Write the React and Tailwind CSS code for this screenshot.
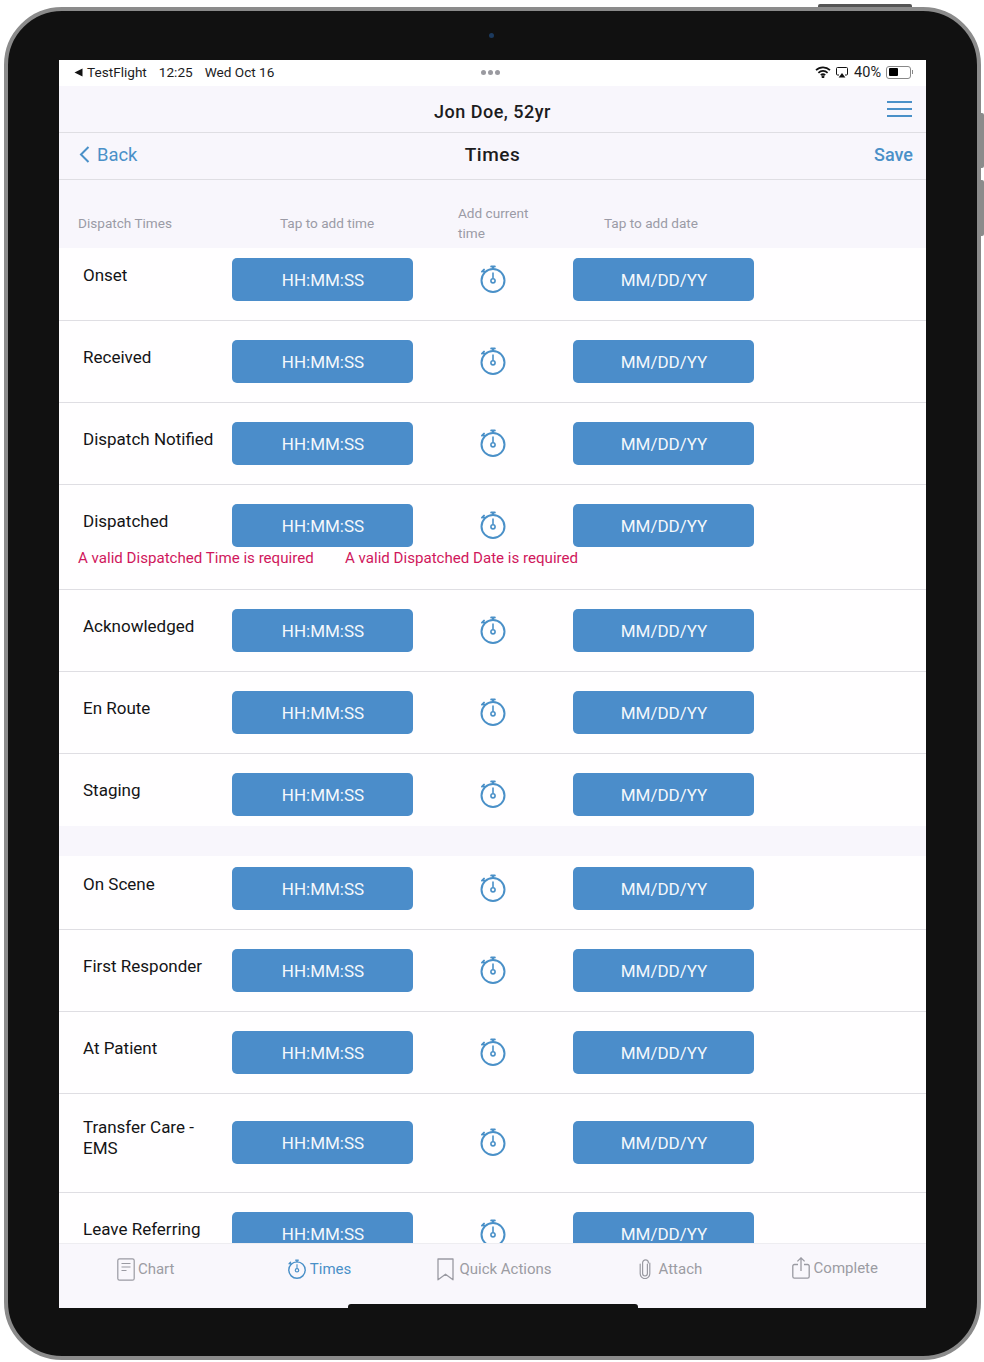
const FONT = "font-['Roboto',sans-serif]";

const GROUP_ONE = [
  { label: "Onset", cls: "pt-[10px] pb-[19px] border-b" },
  { label: "Received", cls: "pt-[19px] pb-[19px] border-b" },
  { label: "Dispatch Notified", cls: "pt-[19px] pb-[19px] border-b" },
  { label: "Dispatched", cls: "pt-[19px] pb-[21px] border-b", error: true },
  { label: "Acknowledged", cls: "pt-[19px] pb-[19px] border-b" },
  { label: "En Route", cls: "pt-[19px] pb-[19px] border-b" },
  { label: "Staging", cls: "pt-[19px] pb-[10px]" },
];

const GROUP_TWO = [
  { label: "On Scene", cls: "pt-[11px] pb-[19px] border-b" },
  { label: "First Responder", cls: "pt-[19px] pb-[19px] border-b" },
  { label: "At Patient", cls: "pt-[19px] pb-[19px] border-b" },
  { label: "Transfer Care - EMS", cls: "pt-[23px] pb-[24px] border-b" },
  { label: "Leave Referring", cls: "pt-[19px] pb-[19px]" },
];

function Stopwatch({ size = 28, dotted = false }) {
  return (
    <svg width={size} height={size} viewBox="0 0 28 28" fill="none" stroke="#4a90c8" strokeWidth="2">
      <circle cx="14" cy="15.5" r="11.5" />
      <path d="M14 4V1.8M12.2 1.6h3.6M5.6 7.2L4 5.6M3 6.6l2-2" strokeLinecap="round" />
      <path d="M14 7.5v6" strokeWidth="1.6" />
      <circle cx="14" cy="15.8" r={dotted ? 2.4 : 2.1} strokeWidth="1.6" />
    </svg>
  );
}

function ChartIcon() {
  return (
    <svg width="18" height="23" viewBox="0 0 18 23" fill="none" stroke="#9a9aa2" strokeWidth="1.2">
      <rect x="0.8" y="0.8" width="16.4" height="21.4" rx="1.8" />
      <path d="M4.5 5.5h9M4.5 9h9M4.5 12.5h5" />
    </svg>
  );
}

function BookmarkIcon() {
  return (
    <svg width="17" height="23" viewBox="0 0 17 23" fill="none" stroke="#9a9aa2" strokeWidth="1.3">
      <path d="M1 1h15v20.8l-7.5-5.6L1 21.8z" strokeLinejoin="round" />
    </svg>
  );
}

function ClipIcon() {
  return (
    <svg width="12" height="20" viewBox="0 0 12 20" fill="none" stroke="#9a9aa2" strokeWidth="1.2">
      <path d="M8.4 5v9.6a2.4 2.4 0 0 1-4.8 0V3.8a2.9 2.9 0 0 1 5.8 0" strokeLinecap="round" />
      <path d="M1.2 5v9.8a4.8 4.8 0 0 0 9.6 0V4" strokeLinecap="round" />
    </svg>
  );
}

function ShareIcon() {
  return (
    <svg width="18" height="22" viewBox="0 0 18 22" fill="none" stroke="#9a9aa2" strokeWidth="1.3">
      <path d="M6 7.5H2.4A1.6 1.6 0 0 0 .8 9.1v10.5a1.6 1.6 0 0 0 1.6 1.6h13.2a1.6 1.6 0 0 0 1.6-1.6V9.1a1.6 1.6 0 0 0-1.6-1.6H12" />
      <path d="M9 14V1M5.4 4.4L9 .9l3.6 3.5" />
    </svg>
  );
}

function PillButton({ children }) {
  return (
    <div className="w-[181px] h-[43px] shrink-0 rounded-[5px] bg-[#4b8dca] flex items-center justify-center pt-[3px] pl-[1px] text-[17px] text-[#f4f8fc]">
      {children}
    </div>
  );
}

function TimeRow({ label, cls, error }) {
  return (
    <div className={`${cls} border-[#dfdee3]`}>
      <div className="flex items-center pl-[24px]">
        <div className="w-[149px] shrink-0 pb-[9px] pr-[8px] text-[17px] leading-[21px] text-[#141416]">{label}</div>
        <PillButton>HH:MM:SS</PillButton>
        <div className="w-[160px] shrink-0 flex justify-center pb-[2px]">
          <Stopwatch />
        </div>
        <PillButton>MM/DD/YY</PillButton>
      </div>
      {error && (
        <div className="flex pl-[19px] mt-[1px] text-[15.1px] leading-[20px] text-[#d0175c]">
          <span className="w-[267px]">A valid Dispatched Time is required</span>
          <span>A valid Dispatched Date is required</span>
        </div>
      )}
    </div>
  );
}

function StatusBar() {
  return (
    <div className="relative h-[26px] shrink-0 bg-white flex items-center pb-[2px] pl-[15px] pr-[13px] text-[13.6px] text-[#1c1c1e]">
      <svg width="9" height="9" viewBox="0 0 9 9" className="mr-[4px]"><path d="M8.5 0.5v8L0.5 4.5z" fill="#111" /></svg>
      <span>TestFlight</span>
      <span className="ml-[12px]">12:25</span>
      <span className="ml-[12px]">Wed Oct 16</span>
      <div className="absolute left-[422px] top-[10px] flex gap-[2px]">
        <span className="w-[5px] h-[5px] rounded-full bg-[#9a9aa0]" />
        <span className="w-[5px] h-[5px] rounded-full bg-[#9a9aa0]" />
        <span className="w-[5px] h-[5px] rounded-full bg-[#9a9aa0]" />
      </div>
      <div className="flex-1" />
      <svg width="16" height="12" viewBox="0 0 16 12" fill="none" stroke="#111" strokeWidth="1.7">
        <path d="M1 4.2a10 10 0 0 1 14 0M3.4 6.8a6.6 6.6 0 0 1 9.2 0M5.8 9.2a3.2 3.2 0 0 1 4.4 0" />
        <circle cx="8" cy="10.8" r="0.6" fill="#111" />
      </svg>
      <svg width="12" height="11" viewBox="0 0 12 11" fill="none" className="ml-[5px]">
        <path d="M3 8H1.5a1 1 0 0 1-1-1V1.5a1 1 0 0 1 1-1h9a1 1 0 0 1 1 1V7a1 1 0 0 1-1 1H9" stroke="#111" />
        <path d="M6 6l3.4 4.4H2.6z" fill="#111" />
      </svg>
      <span className="ml-[6px] mt-[1px] text-[14.5px]">40%</span>
      <div className="ml-[5px] w-[25px] h-[13px] rounded-[3px] border border-[#888] p-[1.5px]">
        <div className="w-[9px] h-full bg-black rounded-[1px]" />
      </div>
      <div className="ml-[1px] w-[1px] h-[4px] bg-[#888]" />
    </div>
  );
}

function Tab({ icon, label, active, cls = "" }) {
  return (
    <div className={`flex items-center justify-center gap-[3px] ${cls}`}>
      {icon}
      <span className={`text-[15px] ${active ? "text-[#4a90c8]" : "text-[#9c9ca3]"}`}>{label}</span>
    </div>
  );
}

export default function App() {
  return (
    <div className={`${FONT} w-[984px] h-[1362px] bg-white pl-[4px] pt-[7px]`}>
      <div className="relative w-[977px] h-[1353px] rounded-[58px] border-[4px] border-[#8b8b8b] bg-[#111111] pl-[51px] pr-[51px] pt-[49px]">
        <div className="absolute -top-[7px] left-[810px] w-[94px] h-[3px] rounded-t-[2px] bg-[#555]" />
        <div className="absolute -right-[7px] top-[102px] w-[3px] h-[55px] rounded-r-[2px] bg-[#8b8b8b]" />
        <div className="absolute -right-[7px] top-[169px] w-[3px] h-[56px] rounded-r-[2px] bg-[#8b8b8b]" />
        <div className="absolute top-[22px] left-[481px] w-[5px] h-[5px] rounded-full bg-[#1c3a5e]" />

        <div className="relative w-[867px] h-[1248px] flex flex-col bg-white overflow-hidden">
          <StatusBar />

          <div className="relative h-[47px] shrink-0 bg-[#f8f6fc] border-b border-[#dfdee3] flex items-center justify-center pt-[4px] text-[18px] tracking-[0.5px] font-medium text-[#1c1c1e]">
            Jon Doe, 52yr
            <div className="absolute right-[14px] top-[15px] w-[25px] flex flex-col gap-[5px]">
              <div className="h-[2px] bg-[#4a90c8]" />
              <div className="h-[2px] bg-[#4a90c8]" />
              <div className="h-[2px] bg-[#4a90c8]" />
            </div>
          </div>

          <div className="h-[47px] shrink-0 bg-[#f8f6fc] border-b border-[#dfdee3] flex items-center pb-[2px] text-[18.4px] text-[#4a90c8]">
            <div className="flex-1 flex items-center gap-[7px] pl-[20px]">
              <svg width="11" height="17" viewBox="0 0 11 17" fill="none" stroke="#4a90c8" strokeWidth="2">
                <path d="M9.5 1L2 8.5 9.5 16" />
              </svg>
              <span>Back</span>
            </div>
            <span className="text-[19px] tracking-[0.5px] font-medium text-[#1c1c1e]">Times</span>
            <span className="flex-1 pl-[7px] pr-[13px] pb-[1px] text-right text-[18px] font-medium">Save</span>
          </div>

          <div className="h-[68px] shrink-0 bg-[#f8f6fc] flex text-[13.6px] leading-[20px] text-[#9b9ba6]">
            <div className="w-[221px] pl-[19px] pt-[33px]">Dispatch Times</div>
            <div className="w-[178px] pt-[33px]">Tap to add time</div>
            <div className="w-[146px] pt-[23px]">Add current<br />time</div>
            <div className="pt-[33px]">Tap to add date</div>
          </div>

          <div className="flex-1 min-h-0 overflow-hidden bg-[#fffeff]">
            {GROUP_ONE.map((r) => (
              <TimeRow key={r.label} {...r} />
            ))}
            <div className="h-[30px] bg-[#f8f6fc]" />
            {GROUP_TWO.map((r) => (
              <TimeRow key={r.label} {...r} />
            ))}
          </div>

          <div className="h-[65px] shrink-0 bg-[#f9f7fc] border-t border-[#eeedf1] grid grid-cols-5 items-start pt-[14px]">
            <Tab icon={<ChartIcon />} label="Chart" />
            <Tab icon={<Stopwatch size={20} dotted />} label="Times" active />
            <Tab icon={<BookmarkIcon />} label="Quick Actions" cls="gap-[5px] pl-[4px]" />
            <Tab icon={<ClipIcon />} label="Attach" cls="gap-[8px] pl-[9px]" />
            <Tab icon={<ShareIcon />} label="Complete" cls="gap-[4px] pr-[9px] -mt-[1px]" />
          </div>

          <div className="absolute bottom-0 left-[289px] w-[290px] h-[4px] rounded-t-[3px] bg-[#111111]" />
        </div>
      </div>
    </div>
  );
}
